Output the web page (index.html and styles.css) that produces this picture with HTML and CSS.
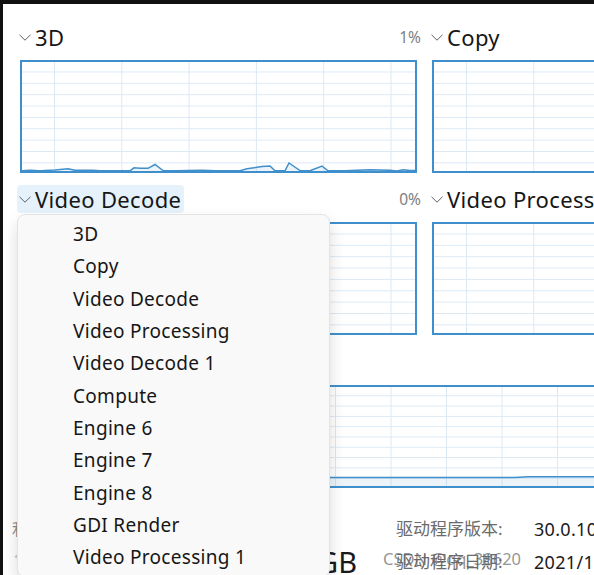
FILE: index.html
```html
<!DOCTYPE html>
<html lang="zh-CN">
<head>
<meta charset="utf-8">
<title>GPU</title>
<link rel="stylesheet" href="styles.css">
</head>
<body>
<div class="screen">
  <div class="panels">
    <section class="panel">
      <div class="head">
        <div class="title-btn"><svg class="chev" viewBox="0 0 12 7"><path d="M0.5 0.8 L6 6.2 L11.5 0.8"/></svg><span class="title">3D</span></div>
        <span class="pct">1%</span>
      </div>
      <div class="graph">
        <svg class="plot" viewBox="22 62 393 109" preserveAspectRatio="none">
          <polygon class="area" points="22,170.8 30,170.3 40,170.8 55,170 68,168.8 75,170.3 93,170.3 100,170.8 130,170.8 134,167.8 140,168.3 148,168.3 155,164.5 163,170.5 175,170.8 202,170.3 215,170.8 240,170.8 247,168.8 262,166.5 270,166 275,170.8 285,170.8 289,163 300,170.5 310,170.8 322,166 328,170.8 345,170.8 357,170.3 370,169.8 390,170.3 397,171 403,169.8 410,170.6 415,170.5 415,171 22,171"/>
          <polyline class="line" points="22,170.8 30,170.3 40,170.8 55,170 68,168.8 75,170.3 93,170.3 100,170.8 130,170.8 134,167.8 140,168.3 148,168.3 155,164.5 163,170.5 175,170.8 202,170.3 215,170.8 240,170.8 247,168.8 262,166.5 270,166 275,170.8 285,170.8 289,163 300,170.5 310,170.8 322,166 328,170.8 345,170.8 357,170.3 370,169.8 390,170.3 397,171 403,169.8 410,170.6 415,170.5"/>
        </svg>
      </div>
    </section>
    <section class="panel">
      <div class="head">
        <div class="title-btn"><svg class="chev" viewBox="0 0 12 7"><path d="M0.5 0.8 L6 6.2 L11.5 0.8"/></svg><span class="title">Copy</span></div>
        <span class="pct">0%</span>
      </div>
      <div class="graph"></div>
    </section>
    <section class="panel">
      <div class="head">
        <div class="title-btn active"><svg class="chev" viewBox="0 0 12 7"><path d="M0.5 0.8 L6 6.2 L11.5 0.8"/></svg><span class="title">Video Decode</span></div>
        <span class="pct">0%</span>
        <ul class="menu">
          <li>3D</li>
          <li>Copy</li>
          <li>Video Decode</li>
          <li>Video Processing</li>
          <li>Video Decode 1</li>
          <li>Compute</li>
          <li>Engine 6</li>
          <li>Engine 7</li>
          <li>Engine 8</li>
          <li>GDI Render</li>
          <li>Video Processing 1</li>
        </ul>
      </div>
      <div class="graph"></div>
    </section>
    <section class="panel">
      <div class="head">
        <div class="title-btn"><svg class="chev" viewBox="0 0 12 7"><path d="M0.5 0.8 L6 6.2 L11.5 0.8"/></svg><span class="title">Video Processing</span></div>
        <span class="pct">0%</span>
      </div>
      <div class="graph"></div>
    </section>
  </div>

  <section class="mem">
    <div class="head">
      <span class="mem-label">专用 GPU 内存使用量</span>
      <span class="pct">8.0 GB</span>
    </div>
    <div class="graph mem-graph">
      <svg class="plot" viewBox="22 387 809 99" preserveAspectRatio="none">
        <polygon class="area" points="22,477.5 515,477.5 528,476.7 831,476.7 831,486 22,486"/>
        <polyline class="line" points="22,477.5 515,477.5 528,476.7 831,476.7"/>
      </svg>
    </div>
  </section>

  <div class="bottom">
    <div class="stats">
      <div class="stat">
        <div class="stat-label">利用率</div>
        <div class="stat-value">1%</div>
      </div>
      <div class="stat right">
        <div class="stat-label">专用 GPU 内存</div>
        <div class="stat-value">0.4/8.0 GB</div>
      </div>
    </div>
    <dl class="driver">
      <dt>驱动程序版本:</dt><dd>30.0.101.1191</dd>
      <dt>驱动程序日期:</dt><dd>2021/12/10</dd>
    </dl>
  </div>

  <div class="watermark">CSDN @qq_38620</div>
</div>
</body>
</html>
```

FILE: styles.css
```css
* { box-sizing: border-box; }

html, body { margin: 0; padding: 0; }

body {
  width: 594px;
  height: 575px;
  overflow: hidden;
  background: #ffffff;
  font-family: "Noto Sans", "Noto Sans CJK SC", sans-serif;
  color: #1a1a1a;
}

.screen {
  position: relative;
  height: 575px;
  border-top: 4px solid #111111;
  border-left: 3px solid #111111;
  padding: 19px 0 0 14px;
}

.panels {
  display: grid;
  grid-template-columns: 404px 404px;
  column-gap: 8px;
  row-gap: 12px;
  width: 816px;
}

.head {
  position: relative;
  display: flex;
  justify-content: space-between;
  height: 28px;
}

.title-btn {
  display: flex;
  align-items: center;
  gap: 4px;
  height: 28px;
  padding: 0 3px 0 2px;
  border-radius: 4px;
}

.title-btn.active { background: #e5f1fb; }

.chev {
  width: 12px;
  height: 7px;
  fill: none;
  stroke: #5f5f5f;
  stroke-width: 1;
}

.title {
  font-size: 22px;
  line-height: 28px;
  letter-spacing: 0.35px;
  color: #161616;
  white-space: nowrap;
}

.pct {
  font-size: 15.5px;
  line-height: 28px;
  color: #7d7d7d;
}

.graph {
  width: 397px;
  height: 113px;
  margin: 9px 0 0 3px;
  border: 2px solid #3f8fcc;
  background-color: #ffffff;
  background-image:
    linear-gradient(#dbe9f5 1px, transparent 1px),
    linear-gradient(90deg, #dbe9f5 1px, transparent 1px);
  background-size: 100% 11.37px, 67.3px 100%;
  background-position: 0 9.5px, 32px 0;
}

.plot {
  display: block;
  width: 100%;
  height: 100%;
}

.plot .line {
  fill: none;
  stroke: #3f8fcc;
  stroke-width: 1.5;
  vector-effect: non-scaling-stroke;
}

.plot .area {
  fill: rgba(70, 147, 204, 0.1);
  stroke: none;
}

.menu {
  position: absolute;
  top: 29px;
  left: 0;
  z-index: 5;
  width: 313px;
  height: 363px;
  margin: 0;
  padding: 3px 0 0 55px;
  list-style: none;
  background: #f9f9f9;
  border: 1px solid #e3e3e3;
  border-radius: 8px;
  box-shadow: 0 8px 16px rgba(0, 0, 0, 0.14);
}

.menu li {
  font-size: 19px;
  line-height: 32.33px;
  letter-spacing: 0.3px;
  color: #161616;
  white-space: nowrap;
}

.mem {
  width: 816px;
  margin-top: 12px;
}

.mem-label {
  font-size: 15px;
  line-height: 28px;
  color: #6e6e6e;
}

.mem-graph {
  width: 813px;
  height: 103px;
  margin-top: 10px;
  background-size: 100% 10.3px, 55.5px 100%;
  background-position: 0 8.3px, 35.5px 0;
}

.bottom {
  display: flex;
  width: 816px;
  margin-top: 26px;
}

.stats {
  display: flex;
  flex-shrink: 0;
  justify-content: space-between;
  width: 345px;
  margin-left: -5px;
}

.stat-label {
  font-size: 16px;
  line-height: 30px;
  color: #8a8a8a;
  white-space: nowrap;
}

.stat-value {
  font-size: 29px;
  line-height: 36px;
  white-space: nowrap;
}

.stat:first-child .stat-value { color: #c9c9c9; }

.stat.right .stat-label { text-align: left; }
.stat.right .stat-value { text-align: right; }

.driver {
  display: grid;
  flex-shrink: 0;
  grid-template-columns: 138px auto;
  margin: 0 0 0 39px;
  font-size: 17px;
  line-height: 30px;
  white-space: nowrap;
}

.driver dt { color: #6b6b6b; }

.driver dd {
  margin: 0;
  font-size: 18px;
  letter-spacing: 0.3px;
  color: #1a1a1a;
}

.watermark {
  position: absolute;
  left: 380px;
  top: 545px;
  font-size: 16.5px;
  line-height: 20px;
  color: rgba(100, 100, 100, 0.7);
  white-space: nowrap;
}
```
